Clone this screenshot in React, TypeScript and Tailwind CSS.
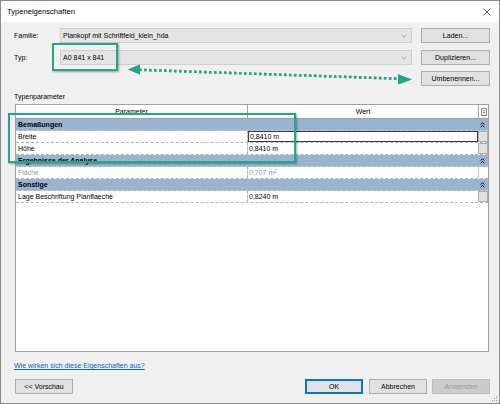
import React from 'react';

const Chevron = () => (
  <svg width="6" height="4" viewBox="0 0 6 4" className="shrink-0">
    <path d="M0.5 0.8 L3 3.2 L5.5 0.8" fill="none" stroke="#8a8a8a" strokeWidth="0.8" />
  </svg>
);

const Collapse = () => (
  <svg width="5" height="6" viewBox="0 0 5 6" className="shrink-0">
    <path d="M0.6 2.6 L2.5 0.7 L4.4 2.6 M0.6 5.3 L2.5 3.4 L4.4 5.3" fill="none" stroke="#111" strokeWidth="1" />
  </svg>
);

const Btn: React.FC<{ label: string; className?: string }> = ({ label, className = '' }) => (
  <div className={`h-[15px] w-[69px] flex items-center justify-center bg-[#e1e1e1] border border-[#adadad] ${className}`}>
    {label}
  </div>
);

const Combo: React.FC<{ value: string }> = ({ value }) => (
  <div className="flex-1 h-[15px] flex items-center justify-between bg-[#e5e5e5] border border-[#cfcfcf] pl-[2px] pr-[4px]">
    <span>{value}</span>
    <Chevron />
  </div>
);

const Group: React.FC<{ label: string }> = ({ label }) => (
  <div className="h-[12px] flex items-center justify-between bg-[#99b4d1] border-b border-dashed border-[#c8c8c8] pl-[2px] pr-[3px] font-bold">
    <span>{label}</span>
    <Collapse />
  </div>
);

const Row: React.FC<{ label: string; value: React.ReactNode; selected?: boolean; disabled?: boolean }> = ({
  label,
  value,
  selected,
  disabled,
}) => (
  <div className={`h-[12px] flex border-b border-dashed border-[#b4b4b4] ${disabled ? 'text-[#9a9a9a]' : ''}`}>
    <div className="w-[232px] pl-[2px] flex items-center border-r border-dashed border-[#b4b4b4]">{label}</div>
    <div className={`flex-1 flex items-center pl-[1px] ${selected ? 'border border-[#3a3a3a]' : ''}`}>{value}</div>
    <div className={`w-[10px] ${disabled ? 'bg-white border-l border-[#c8c8c8]' : 'bg-[#e1e1e1] border border-[#adadad]'}`} />
  </div>
);

export default function App() {
  return (
    <div className="relative w-[500px] h-[404px] bg-[#f0f0f0] border border-[#8a8a8a] flex flex-col font-['Liberation_Sans',Arial,sans-serif] text-[7px] text-black leading-none">
      {/* title bar */}
      <div className="h-[21px] bg-white flex items-center justify-between pl-[6px] pr-[8px]">
        <span className="text-[7.6px]">Typeneigenschaften</span>
        <svg width="8" height="8" viewBox="0 0 8 8">
          <path d="M0.5 0.5 L7.5 7.5 M7.5 0.5 L0.5 7.5" stroke="#333" strokeWidth="0.8" />
        </svg>
      </div>

      <div className="flex-1 flex flex-col pl-[13px] pr-[9px] pt-[6px] pb-[9px]">
        <div className="flex items-center">
          <span className="w-[46px]">Familie:</span>
          <Combo value="Plankopf mit Schriftfeld_klein_hda" />
          <Btn label="Laden..." className="ml-[9px]" />
        </div>
        <div className="flex items-center mt-[7px]">
          <span className="w-[46px]">Typ:</span>
          <Combo value="A0 841 x 841" />
          <Btn label="Duplizieren..." className="ml-[9px]" />
        </div>
        <div className="flex justify-end mt-[6px]">
          <Btn label="Umbenennen..." />
        </div>

        <div className="mt-[6px] leading-[9px]">Typenparameter</div>

        <div className="mt-[3px] ml-[1px] mr-[1px] h-[248px] bg-white border border-[#a0a0a0] flex flex-col">
          <div className="h-[14px] flex border-b border-[#a0a0a0] shrink-0">
            <div className="w-[232px] flex items-center justify-center border-r border-[#a0a0a0]">Parameter</div>
            <div className="flex-1 flex items-center justify-center">Wert</div>
            <div className="w-[10px] flex items-center justify-center border-l border-[#a0a0a0]">
              <div className="w-[6px] h-[8px] border border-[#8a8a8a] bg-[#f4f4f4] flex flex-col justify-center gap-[1px] px-[1px]">
                <div className="h-[1px] bg-[#e08060]" />
                <div className="h-[1px] bg-[#888]" />
              </div>
            </div>
          </div>
          <Group label="Bemaßungen" />
          <Row label="Breite" value="0,8410 m" selected />
          <Row label="Höhe" value="0,8410 m" />
          <Group label="Ergebnisse der Analyse" />
          <Row
            label="Fläche"
            value={
              <span>
                0,707 m<sup className="text-[4.5px]">2</sup>
              </span>
            }
            disabled
          />
          <Group label="Sonstige" />
          <Row label="Lage Beschriftung Planflaeche" value="0,8240 m" />
        </div>

        <div className="mt-[9px] leading-[9px]">
          <span className="text-[#0066cc] underline">Wie wirken sich diese Eigenschaften aus?</span>
        </div>

        <div className="mt-auto flex items-center">
          <div className="h-[15px] w-[58px] ml-[1px] flex items-center justify-center bg-[#e1e1e1] border border-[#adadad]">
            &lt;&lt; Vorschau
          </div>
          <div className="ml-auto h-[15px] w-[58px] flex items-center justify-center bg-[#e1e1e1] border-2 border-[#0078d7]">
            OK
          </div>
          <div className="ml-[6px] h-[15px] w-[58px] flex items-center justify-center bg-[#e1e1e1] border border-[#adadad]">
            Abbrechen
          </div>
          <div className="ml-[5px] h-[15px] w-[58px] flex items-center justify-center bg-[#cccccc] border border-[#bfbfbf] text-[#9a9a9a]">
            Anwenden
          </div>
        </div>
      </div>

      {/* resize grip */}
      <svg className="absolute right-[1px] bottom-[1px]" width="7" height="7" viewBox="0 0 7 7">
        <rect x="5" y="1" width="1" height="1" fill="#a0a0a0" />
        <rect x="3" y="3" width="1" height="1" fill="#a0a0a0" />
        <rect x="5" y="3" width="1" height="1" fill="#a0a0a0" />
        <rect x="1" y="5" width="1" height="1" fill="#a0a0a0" />
        <rect x="3" y="5" width="1" height="1" fill="#a0a0a0" />
        <rect x="5" y="5" width="1" height="1" fill="#a0a0a0" />
      </svg>

      {/* annotations */}
      <div className="absolute left-[51px] top-[42px] w-[66px] h-[28px] border-2 border-[#1ea98b] shadow-[1px_1px_2px_rgba(0,0,0,0.35)] pointer-events-none" />
      <div className="absolute left-[7px] top-[112px] w-[288px] h-[50px] border-2 border-[#1ea98b] shadow-[1px_1px_2px_rgba(0,0,0,0.35)] pointer-events-none" />
      <svg className="absolute left-0 top-0 pointer-events-none" width="500" height="404" viewBox="0 0 500 404">
        <g style={{ filter: 'drop-shadow(0.6px 0.6px 0.5px rgba(0,0,0,0.35))' }}>
          <line x1="138" y1="68.8" x2="398" y2="77.7" stroke="#1ea98b" strokeWidth="2.6" strokeDasharray="2.6 2.4" />
          <polygon points="127,68.4 139,63.4 139,73.6" fill="#1ea98b" />
          <polygon points="411,78.4 397,73.2 397,83.4" fill="#1ea98b" />
        </g>
      </svg>
    </div>
  );
}
